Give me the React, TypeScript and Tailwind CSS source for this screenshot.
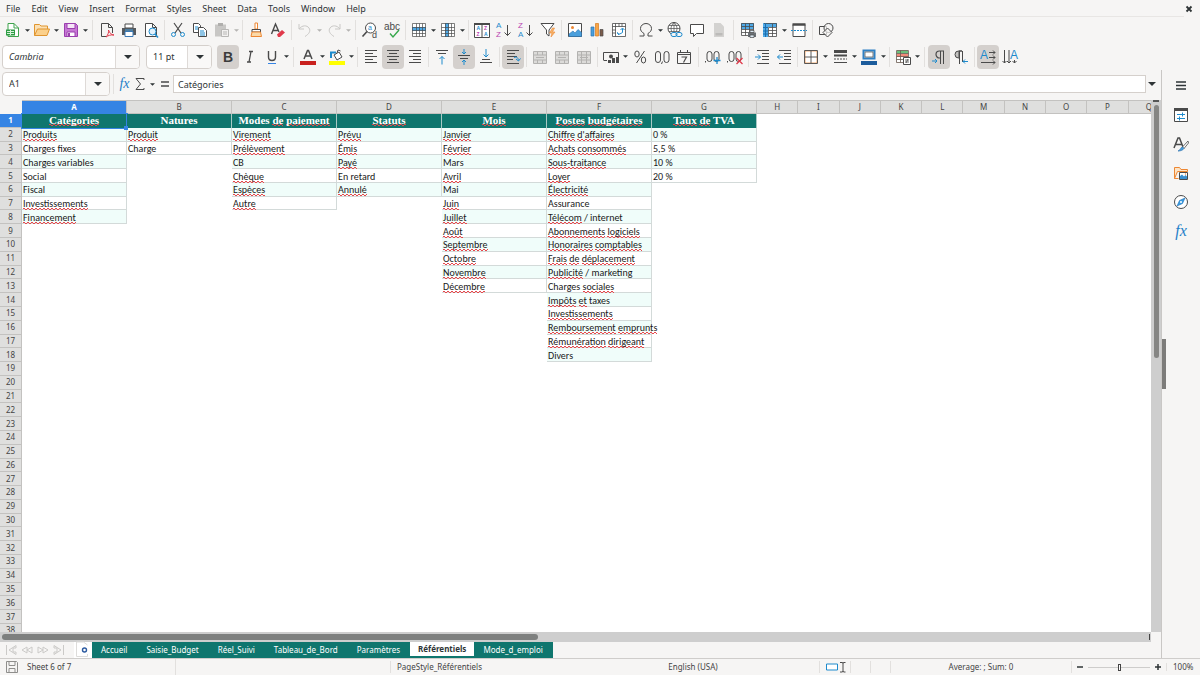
import * as React from "react";
import { useState } from "react";
import { clsx } from "clsx";

const INK = "#4a4a4a";
const BLUE = "#1e8bcd";
const PURPLE = "#b83fb0";
const ORANGE = "#ed8733";

interface Tool {
  id: string;
  icon: React.ReactNode;
  menu?: boolean;
  active?: boolean;
  disabled?: boolean;
}

interface ToolGroup {
  tools: Tool[];
  wide?: boolean;
}

const alignLines = (widths: number[][]) => (
  <g stroke={INK} strokeWidth="1">
    {widths.map(([x1, x2, y]) => (
      <path key={y} d={`M${x1} ${y}H${x2}`} />
    ))}
  </g>
);

const grid = (
  <path d="M1.5 1.5h13v13h-13zM1.5 5.500h13M1.5 8.500h13M1.5 11.500h13M5.500 1.500v13M8.500 1.500v13M11.500 1.500v13" stroke={INK} strokeWidth=".7" fill="none" />
);

const mergeGrid = (
  <>
    <path d="M1.5 2.5h13v12h-13z" fill="#dcdbd9" />
    <path d="M1.5 2.5h13v12h-13zM1.5 6h13M1.5 11h13M5.5 2.5v3.5M10.5 2.5v3.5M5.5 11v3.5M10.5 11v3.5M4 8.500h8" stroke="#b3b2b0" fill="none" />
  </>
);

const pilcrow = "M13 2H8.5a3.5 3.5 0 0 0 0 7H9";

const standardTools: ToolGroup[] = [
  {
    wide: true,
    tools: [
      {
        id: "New",
        menu: true,
        icon: (
          <>
            <path d="M3 1.5h6l4.5 4.5v8.5H3z" fill="#fff" stroke="#3fa34d" />
            <path d="M9 1.5v4.5h4.5" fill="none" stroke="#3fa34d" />
            <path d="M1 7.5h9v6H1z" fill="#2f9e44" />
            <path d="M2 9.5h7M2 11.5h7M5.500 8v5" stroke="#d6f0da" />
          </>
        )
      },
      {
        id: "Open",
        menu: true,
        icon: (
          <>
            <path d="M.5 13.500V2.500h5l1.500 1.500h6.500v3" fill="#fbe0b4" stroke="#e0952f" />
            <path d="M.5 13.500L3.500 7h12l-2.500 6.500z" fill="#fbd08b" stroke="#e0952f" />
          </>
        )
      },
      {
        id: "Save",
        menu: true,
        icon: (
          <>
            <path d="M1.500 1.500h11l2 2v11h-13z" fill="#c678d4" stroke="#9b3fae" />
            <path d="M4 1.500h8v5H4z" fill="#f6e6f8" stroke="#9b3fae" />
            <path d="M4 10h8v4.500H4z" fill="#fff" stroke="#9b3fae" />
            <path d="M6 11v3" stroke="#9b3fae" strokeWidth="2" />
          </>
        )
      }
    ]
  },
  {
    tools: [
      {
        id: "Export as PDF",
        icon: (
          <>
            <path d="M2.500 1.500h7l4 4V11M2.500 1.500v13h5M9.500 1.500v4h4" fill="none" stroke={INK} />
            <path d="M7 15c2-2 3-5 2.500-7 1 3 3 5 5.500 5-3-.5-6 .5-8 2z" fill="none" stroke="#e0394a" />
          </>
        )
      },
      {
        id: "Print",
        icon: (
          <>
            <path d="M4 2h8v4H4z" fill="#fff" stroke={INK} />
            <path d="M1 6h14v7H1z" fill="#55595d" />
            <path d="M4 9.500h8v5H4z" fill="#fff" stroke="#3a78b5" />
            <path d="M4 8h8" stroke="#49a3e2" />
          </>
        )
      },
      {
        id: "Print Preview",
        icon: (
          <>
            <path d="M2.500 14.500V1.500h7l4 4v9zM9.500 1.500v4h4" fill="#fff" stroke={INK} />
            <circle cx="9.500" cy="9.500" r="3.500" fill="#e3f1fb" stroke={BLUE} />
            <path d="M12 12l3 3.500" stroke={BLUE} strokeWidth="1.500" />
          </>
        )
      }
    ]
  },
  {
    tools: [
      {
        id: "Cut",
        icon: (
          <>
            <path d="M4 1l7 10M12 1L5 11" stroke={INK} strokeWidth="1.200" />
            <circle cx="3.500" cy="12.500" r="2" fill="none" stroke={BLUE} />
            <circle cx="12.500" cy="12.500" r="2" fill="none" stroke={BLUE} />
          </>
        )
      },
      {
        id: "Copy",
        icon: (
          <>
            <path d="M1.500 10.500v-9h5l2 2v7z" fill="#fff" stroke={INK} />
            <path d="M6.500 14.500v-9h5l3 3v6z" fill="#fff" stroke={INK} />
            <path d="M3 5h3M3 7h3M8 9h4M8 11h5M8 13h5" stroke={BLUE} />
          </>
        )
      },
      {
        id: "Paste",
        menu: true,
        disabled: true,
        icon: (
          <>
            <path d="M1 2.500h11v12H1z" fill="#c8c7c5" />
            <path d="M4 1h5v3H4z" fill="#b0afad" />
            <path d="M7.500 7.500h7v7h-7z" fill="#f2f1f0" stroke="#b8b7b5" />
            <path d="M9 10h4M9 12h4" stroke="#b8b7b5" />
          </>
        )
      }
    ]
  },
  {
    tools: [
      {
        id: "Clone Formatting",
        icon: (
          <>
            <path d="M7 1h2.500v6H7z" fill="#fff" stroke={ORANGE} />
            <path d="M4 7.500h8.500v2.500H4z" fill="#fff" stroke={INK} />
            <path d="M4 10h8.500l1 4.500H3z" fill="#fbd9a8" stroke={ORANGE} />
          </>
        )
      },
      {
        id: "Clear Direct Formatting",
        icon: (
          <>
            <path d="M1.500 12L5.500 2l3.500 8M3 8.500h5" fill="none" stroke={INK} strokeWidth="1.400" />
            <path d="M7 12.500l5-4.500 3 2.500-5 4.500H8z" fill="#e0394a" />
          </>
        )
      }
    ]
  },
  {
    wide: true,
    tools: [
      { id: "Undo", menu: true, disabled: true, icon: <path d="M2 2v5h5M2 7c3-4 8-4 10-1s0 6-4 8.500" fill="none" stroke="#c9c8c6" /> },
      { id: "Redo", menu: true, disabled: true, icon: <path d="M14 2v5H9M14 7c-3-4-8-4-10-1s0 6 4 8.500" fill="none" stroke="#c9c8c6" /> }
    ]
  },
  {
    tools: [
      {
        id: "Find and Replace",
        icon: (
          <>
            <circle cx="8.500" cy="6" r="5" fill="#fff" stroke={INK} />
            <path d="M5 9.500L.5 14.500" stroke={INK} strokeWidth="1.600" />
            <text x="6" y="8" fontSize="7" fill={BLUE}>a</text>
            <text x="10" y="15.500" fontSize="9" fill={INK}>d</text>
          </>
        )
      },
      {
        id: "Spelling",
        icon: (
          <>
            <text x="0" y="7.500" fontSize="10" fill={INK}>abc</text>
            <path d="M6 11.500l3 3.500 6-7" fill="none" stroke="#37a84c" strokeWidth="1.400" />
          </>
        )
      }
    ]
  },
  {
    tools: [
      { id: "Row", menu: true, icon: <><path d="M1.500 1.500h13v13h-13z" fill="#fff" /><path d="M1 5h14v4H1z" fill="#4fa9e6" />{grid}</> },
      { id: "Column", menu: true, icon: <><path d="M1.500 1.500h13v13h-13z" fill="#fff" /><path d="M5 1h4v14H5z" fill="#4fa9e6" />{grid}</> }
    ]
  },
  {
    tools: [
      {
        id: "Sort",
        icon: (
          <>
            <path d="M.5 1.500h15v14H.5zM8 1.500v14" fill="#fff" stroke={INK} />
            <path d="M0 2h16" stroke={INK} strokeWidth="2" />
            <g fontSize="5" fontWeight="700">
              <text x="2.500" y="8" fill={BLUE}>A</text>
              <text x="2.500" y="14" fill={PURPLE}>Z</text>
              <text x="10" y="8" fill={PURPLE}>Z</text>
              <text x="10" y="14" fill={BLUE}>A</text>
            </g>
          </>
        )
      },
      {
        id: "Sort Ascending",
        icon: (
          <>
            <text x="0" y="6" fontSize="8" fill={BLUE}>A</text>
            <text x="0" y="15" fontSize="8" fill={PURPLE}>Z</text>
            <path d="M11.500 3v10.500M8.500 10.500l3 3 3-3" fill="none" stroke={INK} />
          </>
        )
      },
      {
        id: "Sort Descending",
        icon: (
          <>
            <text x="0" y="6" fontSize="8" fill={PURPLE}>Z</text>
            <text x="0" y="15" fontSize="8" fill={BLUE}>A</text>
            <path d="M11.500 3v10.500M8.500 10.500l3 3 3-3" fill="none" stroke={INK} />
          </>
        )
      },
      {
        id: "AutoFilter",
        icon: (
          <>
            <path d="M1 1.500h13L9 8v6L6.500 12V8z" fill="#fff" stroke={INK} />
            <path d="M12.500 6l-3 5h2.500l-1 4 4-5h-2.500l2-4z" fill="#f7b46a" stroke={ORANGE} strokeWidth=".6" />
          </>
        )
      }
    ]
  },
  {
    tools: [
      {
        id: "Insert Image",
        icon: (
          <>
            <path d="M1.500 1.500h13v13h-13z" fill="#fff" stroke={INK} />
            <circle cx="5.500" cy="5.500" r="1.500" fill={ORANGE} />
            <path d="M2 12l4-3 2 2 3-3.500 3.500 3V14.500H2z" fill="#4a9fdc" stroke="#2d73b0" strokeWidth=".6" />
          </>
        )
      },
      {
        id: "Insert Chart",
        icon: (
          <>
            <path d="M2 5h3v9H2z" fill="#4a9fdc" stroke="#2d73b0" strokeWidth=".7" />
            <path d="M6.500 1.500h3V14h-3z" fill="#f7a648" stroke="#d97a1c" strokeWidth=".7" />
            <path d="M11 7.500h3V14h-3z" fill="#7b5b4a" stroke={INK} strokeWidth=".7" />
          </>
        )
      },
      {
        id: "Insert Pivot Table",
        icon: (
          <>
            <path d="M1.500 1.500h13v13h-13zM1.500 4.500h13M4.500 1.500v13M8 1.500v3M11 1.500v3M1.500 8h3M1.500 11h3" fill="#fff" stroke={INK} strokeWidth=".8" />
            <path d="M6.500 10.500c0 2 1 2.500 5 0V6.500M9.500 8l2-2 2 2M8 13l-1.500-2.500" fill="none" stroke={BLUE} />
          </>
        )
      }
    ]
  },
  {
    wide: true,
    tools: [
      { id: "Special Character", menu: true, icon: <path d="M1.500 14h4.500v-2.500C3.500 10 2.500 8.500 2.500 6.500a5.500 5 0 0 1 11 0c0 2-1 3.500-3.500 5V14h4.500" fill="none" stroke={INK} /> },
      {
        id: "Hyperlink",
        icon: (
          <>
            <circle cx="7" cy="6.500" r="6" fill="#fff" stroke={INK} />
            <path d="M1 6.500h12M2 3.500h10M2 9.500h10M7 .5v12M7 .5c-4 4-4 8 0 12M7 .5c4 4 4 8 0 12" fill="none" stroke={INK} strokeWidth=".7" />
            <path d="M4 10h12v6H4z" fill="#f6f5f4" />
            <rect x="4" y="10.500" width="6" height="4" rx="2" fill="none" stroke={BLUE} />
            <rect x="9" y="10.500" width="6" height="4" rx="2" fill="none" stroke={BLUE} />
          </>
        )
      },
      { id: "Comment", icon: <path d="M1.500 2.500h13v9H7.500l-3 3v-3h-3z" fill="#fff" stroke={INK} /> },
      {
        id: "Headers and Footers",
        disabled: true,
        icon: (
          <>
            <path d="M3 1h6.500L13 4.500V15H3z" fill="#d3d2d0" />
            <path d="M4.500 11h7v2.500h-7z" fill="#bcbbb9" />
          </>
        )
      }
    ]
  },
  {
    tools: [
      {
        id: "Define Print Area",
        icon: (
          <>
            <path d="M1.500 1.500h12v12h-12z" fill="#fff" />
            <path d="M1 1h13v6H1z" fill="#4fa9e6" />
            <path d="M1.500 1.500h12v12h-12zM1.500 4.500h12M1.500 7.500h12M1.500 10.500h12M5.500 1.500v12M9.500 1.500v12" fill="none" stroke={INK} strokeWidth=".8" />
            <path d="M8 10.500h8V15H8z" fill="#6b7075" />
            <path d="M10 8.500h4v2h-4zM10 13h4v2.500h-4z" fill="#dceaf5" stroke={INK} strokeWidth=".7" />
          </>
        )
      },
      {
        id: "Freeze Rows and Columns",
        menu: true,
        icon: (
          <>
            <path d="M1.500 1.500h13v13h-13z" fill="#fff" />
            <path d="M1 1h14v4H1zM1 1h5v14H1z" fill="#4fa9e6" />
            <path d="M6.500 5.500h8v9h-8zM6.500 8.500h8M6.500 11.500h8M10.500 2v12.500M2 1.500h12.500v4" fill="none" stroke={INK} strokeWidth=".8" />
            <path d="M1 5.500h5M1 9h5M1 12h5M3.500 1v14" stroke="#1b6fb0" />
          </>
        )
      },
      {
        id: "Split Window",
        icon: (
          <>
            <path d="M2 2.500h12v12H2z" fill="#fff" stroke={INK} />
            <path d="M1.500 2.500h13" stroke={INK} strokeWidth="2.500" />
            <path d="M0 8.500h16" stroke={BLUE} strokeDasharray="2 1" />
          </>
        )
      }
    ]
  },
  {
    tools: [
      {
        id: "Show Draw Functions",
        icon: (
          <>
            <path d="M1.500 4.500h7v8h-7z" fill="#f6f5f4" stroke={INK} />
            <circle cx="10.500" cy="6" r="4.500" fill="#f6f5f4" fillOpacity=".7" stroke={INK} />
            <path d="M9.500 6l4.500 4.500-4.500 4.500L5 10.500z" fill="#f6f5f4" fillOpacity=".7" stroke={INK} />
          </>
        )
      }
    ]
  }
];

const formatTools: ToolGroup[] = [
  {
    wide: true,
    tools: [
      { id: "Bold", active: true, icon: <text x="3" y="13" fontSize="14" fontWeight="700" fill="#3b3b3b">B</text> },
      { id: "Italic", icon: <path d="M7 2.500h4M5 13h4M9 2.500L7 13" stroke={INK} strokeWidth="1.300" /> },
      {
        id: "Underline",
        menu: true,
        icon: (
          <>
            <path d="M4.500 2v6c0 2.500 1.200 3.500 3.500 3.500s3.500-1 3.500-3.500V2" fill="none" stroke={INK} strokeWidth="1.400" />
            <path d="M4 14.500h8" stroke="#3584e4" />
          </>
        )
      }
    ]
  },
  {
    tools: [
      {
        id: "Font Color",
        menu: true,
        icon: (
          <>
            <path d="M4 10L7.500 1.500h1L12 10M5.500 7h5" fill="none" stroke={INK} strokeWidth="1.500" />
            <path d="M0 14h16" stroke="#c9211e" strokeWidth="4" />
          </>
        )
      },
      {
        id: "Highlighting Color",
        menu: true,
        icon: (
          <>
            <path d="M2 9V3.500h5" fill="none" stroke={BLUE} strokeWidth="2" />
            <path d="M5 6l5-3 3 5-5 3zM8 4l1-3 2.500 1" fill="#fff" stroke={INK} />
            <path d="M0 14h16" stroke="#ffff00" strokeWidth="4" />
          </>
        )
      }
    ]
  },
  {
    tools: [
      { id: "Align Left", icon: alignLines([[2, 14, 1.5], [2, 10, 4.5], [2, 14, 7.5], [2, 10, 10.5], [2, 14, 13.5]]) },
      { id: "Center Horizontally", active: true, icon: alignLines([[2, 14, 1.5], [4, 12, 4.5], [2, 14, 7.5], [4, 12, 10.5], [2, 14, 13.5]]) },
      { id: "Align Right", icon: alignLines([[2, 14, 1.5], [6, 14, 4.5], [2, 14, 7.5], [6, 14, 10.5], [2, 14, 13.5]]) }
    ]
  },
  {
    tools: [
      { id: "Align Top", icon: <>{alignLines([[2, 14, 1.5], [4, 12, 4.5]])}<path d="M8 15.500v-8M5.500 10L8 7.500l2.500 2.500" fill="none" stroke={BLUE} /></> },
      { id: "Center Vertically", active: true, icon: <>{alignLines([[2, 14, 6.5], [4, 12, 9.5]])}<path d="M8 0v5M6 3l2 2 2-2M8 16v-5M6 13l2-2 2 2" fill="none" stroke={BLUE} /></> },
      { id: "Align Bottom", icon: <>{alignLines([[4, 12, 10.5], [2, 14, 13.5]])}<path d="M8 0v8M5.500 5.500L8 8l2.500-2.500" fill="none" stroke={BLUE} /></> }
    ]
  },
  {
    tools: [
      { id: "Wrap Text", active: true, icon: <>{alignLines([[2, 14, 1.5], [2, 10, 4.5], [2, 12, 7.5], [2, 8, 10.5], [2, 14, 14.5]])}<path d="M9 8.500c3-1 4 0 4.500 3M11 10l2.500 2 2-2.500" fill="none" stroke={BLUE} /></> }
    ]
  },
  {
    tools: [
      { id: "Merge and Center Cells", disabled: true, icon: mergeGrid },
      { id: "Merge Cells", disabled: true, icon: mergeGrid },
      { id: "Unmerge Cells", disabled: true, icon: <>{mergeGrid}<path d="M5.500 6v5M10.500 6v5" stroke="#b3b2b0" /></> }
    ]
  },
  {
    wide: true,
    tools: [
      {
        id: "Format as Currency",
        menu: true,
        icon: (
          <>
            <path d="M.5 11.500v-8h15v5M1 11.500h3" fill="none" stroke={INK} />
            <circle cx="8" cy="7.500" r="2" fill={INK} />
            <path d="M5 11h3v3H5zM9 9h3v5H9zM13 8h3v6h-3z" fill={INK} />
          </>
        )
      },
      {
        id: "Format as Percent",
        icon: (
          <g fill="none" stroke={INK}>
            <ellipse cx="5" cy="5" rx="2.200" ry="3" />
            <ellipse cx="11.500" cy="11" rx="2.200" ry="3" />
            <path d="M12.500 2l-8 12" />
          </g>
        )
      },
      {
        id: "Format as Number",
        icon: (
          <g fill="none" stroke={INK}>
            <rect x="1.500" y="2.500" width="5" height="11" rx="2.500" />
            <rect x="10" y="2.500" width="5" height="11" rx="2.500" />
            <path d="M8.500 12.500l-1 2.500" />
          </g>
        )
      },
      {
        id: "Format as Date",
        icon: (
          <>
            <path d="M1.500 3.500h13v11h-13zM1.500 5.500h13M4.500 1v3M11.500 1v3" fill="none" stroke={INK} />
            <path d="M5.500 8h5l-3 5.500" fill="none" stroke={INK} strokeWidth="1.200" />
          </>
        )
      }
    ]
  },
  {
    tools: [
      {
        id: "Add Decimal Place",
        icon: (
          <g fill="none" stroke={INK}>
            <rect x="2" y="2.500" width="5" height="10" rx="2.500" />
            <rect x="9" y="2.500" width="5" height="10" rx="2.500" />
            <path d="M.5 12v1.500" />
            <path d="M12 8v7M8.500 11.500h7" stroke={BLUE} strokeWidth="1.300" />
          </g>
        )
      },
      {
        id: "Delete Decimal Place",
        icon: (
          <g fill="none" stroke={INK}>
            <rect x="2" y="2.500" width="5" height="10" rx="2.500" />
            <rect x="9" y="2.500" width="5" height="10" rx="2.500" />
            <path d="M.5 12v1.500" />
            <path d="M9.500 9l6 6M15.500 9l-6 6" stroke="#e0394a" strokeWidth="1.300" />
          </g>
        )
      }
    ]
  },
  {
    tools: [
      { id: "Increase Indent", icon: <>{alignLines([[3, 15, 1.5], [8, 15, 4.5], [8, 15, 7.5], [8, 15, 10.5], [3, 15, 14.5]])}<path d="M1 8h5.500M4 5.500L6.500 8 4 10.500" fill="none" stroke={BLUE} /></> },
      { id: "Decrease Indent", icon: <>{alignLines([[3, 15, 1.5], [8, 15, 4.5], [8, 15, 7.5], [8, 15, 10.5], [3, 15, 14.5]])}<path d="M7 8H1.500M4 5.500L1.500 8 4 10.500" fill="none" stroke={BLUE} /></> }
    ]
  },
  {
    tools: [
      { id: "Borders", menu: true, icon: <><path d="M2 2h12v12H2z" fill="#fff" stroke={ORANGE} strokeWidth=".7" /><path d="M1.500 1.500h13v13h-13zM8 2v12M2 8h12" stroke={INK} strokeWidth=".9" /></> },
      { id: "Border Style", menu: true, icon: <><path d="M2 2.500h13" stroke={INK} strokeWidth="3" /><path d="M2 6.500h13" stroke={INK} strokeWidth="2" /><path d="M2 10h13" stroke={INK} strokeDasharray="2 1" /><path d="M2 13.500h13" stroke={INK} /></> },
      { id: "Border Color", menu: true, icon: <><path d="M2.500 1.500h11v8h-11z" fill="#fff" stroke="#2f80c3" strokeWidth="2" /><path d="M4 3h8v5H4z" fill="none" stroke={INK} strokeWidth=".7" /><path d="M0 14h16" stroke="#1c5c9c" strokeWidth="4" /></> }
    ]
  },
  {
    wide: true,
    tools: [
      {
        id: "Conditional Formatting",
        menu: true,
        icon: (
          <>
            <path d="M1.500 1.500h12v12h-12z" fill="#fff" />
            <path d="M2 1.500h11v3H2z" fill="#6cc07c" />
            <path d="M2 5h11v3H2z" fill="#f28a7a" />
            <path d="M1.500 1.500h12v12h-12zM1.500 4.500h12M1.500 7.500h12M1.500 10.500h12M5.500 1.500v12" fill="none" stroke="#6a5a50" strokeWidth=".8" />
            <path d="M8.500 8.500h7v7h-7z" fill="#fff" stroke={INK} />
            <path d="M10 11h4M10 13h4M13 10l-2 4" stroke={INK} strokeWidth=".8" />
          </>
        )
      }
    ]
  },
  {
    tools: [
      { id: "Left-To-Right", active: true, icon: <><path d={pilcrow} fill="none" stroke={INK} strokeWidth="1.200" /><path d="M9.500 2v13M12.500 2v13" stroke={INK} /><path d="M1 12h5M4 10l2 2-2 2" fill="none" stroke={BLUE} /></> },
      { id: "Right-To-Left", icon: <><path d="M9 2H5.500a3.500 3.500 0 0 0 0 7H6V2z" fill="#c4c3c1" stroke={INK} /><path d="M6.500 2v13M9.500 2v11" stroke={INK} /><path d="M15 12.500h-5M12 10.500l-2 2 2 2" fill="none" stroke={BLUE} /></> }
    ]
  },
  {
    tools: [
      { id: "Text Direction Left to Right", active: true, icon: <><text x="0" y="10" fontSize="12" fill={BLUE}>A</text><path d="M9 3.500h6M13 1.500l2 2-2 2M9 8.500h6M13 6.500l2 2-2 2M1 13.500h14M13 11.500l2 2-2 2" fill="none" stroke={INK} /></> },
      { id: "Text Direction Top to Bottom", icon: <><text x="8" y="10" fontSize="12" fill={BLUE}>A</text><path d="M2.500 1v13M.5 12l2 2 2-2M7 1v13M5 12l2 2 2-2M12.500 11v3M10.500 12l2 2 2-2" fill="none" stroke={INK} /></> }
    ]
  }
];

// Square brackets mark the words the spell checker underlines.
const headers = [
  "[Catégories]",
  "Natures",
  "Modes [de] [paiement]",
  "[Statuts]",
  "[Mois]",
  "[Postes] [budgétaires]",
  "[Taux] [de] TVA"
];

const columns: string[][] = [
  ["[Produits]", "Charges fixes", "Charges variables", "Social", "Fiscal", "[Investissements]", "[Financement]"],
  ["[Produit]", "Charge"],
  ["[Virement]", "[Prélèvement]", "CB", "[Chèque]", "[Espèces]", "[Autre]"],
  ["[Prévu]", "[Émis]", "[Payé]", "En retard", "[Annulé]"],
  ["[Janvier]", "[Février]", "Mars", "[Avril]", "Mai", "[Juin]", "[Juillet]", "[Août]", "[Septembre]", "[Octobre]", "[Novembre]", "[Décembre]"],
  [
    "[Chiffre] [d'affaires]",
    "[Achats] [consommés]",
    "[Sous-traitance]",
    "[Loyer]",
    "[Électricité]",
    "Assurance",
    "[Télécom] / internet",
    "[Abonnements] [logiciels]",
    "[Honoraires] [comptables]",
    "[Frais] [de] [déplacement]",
    "[Publicité] / marketing",
    "Charges [sociales]",
    "[Impôts] [et] taxes",
    "[Investissements]",
    "[Remboursement] [emprunts]",
    "[Rémunération] [dirigeant]",
    "Divers"
  ],
  ["0 %", "5,5 %", "10 %", "20 %"]
];

const letters = "ABCDEFGHIJKLMNOPQ".split("");
const rowNumbers = Array.from({ length: 38 }, (_, i) => i + 1);
const menus = ["File", "Edit", "View", "Insert", "Format", "Styles", "Sheet", "Data", "Tools", "Window", "Help"];
const sheets = ["Accueil", "Saisie_Budget", "Réel_Suivi", "Tableau_de_Bord", "Paramètres", "Référentiels", "Mode_d_emploi"];

function Icon({ children, className }: { children: React.ReactNode; className?: string }) {
  return (
    <svg viewBox="0 0 16 16" className={clsx("size-4 shrink-0 overflow-visible font-['Liberation_Sans',sans-serif]", className)} fill="none" aria-hidden="true">
      {children}
    </svg>
  );
}

function Caret({ faded, big }: { faded?: boolean; big?: boolean }) {
  return (
    <svg viewBox="0 0 8 4" className={big ? "h-1 w-2" : "h-[3px] w-[5px]"} aria-hidden="true">
      <path d="M0 0h8L4 4z" fill={faded ? "#b5b4b2" : "#2e3436"} />
    </svg>
  );
}

function Divider({ wide }: { wide?: boolean }) {
  return (
    <div className={clsx("flex h-5 shrink-0 justify-center", wide ? "w-[7px]" : "w-[5px]")}>
      <div className="w-px bg-[#e2e0de]" />
    </div>
  );
}

function Toolbar({ groups, label }: { groups: ToolGroup[]; label: string }) {
  return (
    <div role="toolbar" aria-label={label} className="flex items-center">
      {groups.map((group, i) => (
        <React.Fragment key={i}>
          {group.tools.map((tool) => (
            <React.Fragment key={tool.id}>
              <button
                aria-label={tool.id}
                disabled={tool.disabled}
                className={clsx("flex h-6 w-[22px] shrink-0 items-center justify-center rounded", tool.active && "bg-[#d4d0cd]")}
              >
                <Icon>{tool.icon}</Icon>
              </button>
              {tool.menu && (
                <button aria-label={`${tool.id} options`} disabled={tool.disabled} className="flex h-6 w-[7px] shrink-0 items-center justify-center">
                  <Caret faded={tool.disabled} />
                </button>
              )}
            </React.Fragment>
          ))}
          {i < groups.length - 1 && <Divider wide={group.wide} />}
        </React.Fragment>
      ))}
    </div>
  );
}

function ComboBox({ label, value, className, inputClass }: { label: string; value: string; className: string; inputClass?: string }) {
  return (
    <div className={clsx("flex h-6 shrink-0 overflow-hidden rounded border border-[#d5d0cc] bg-white", className)}>
      <input aria-label={label} defaultValue={value} className={clsx("min-w-0 flex-1 px-1.5 text-[9px] text-[#2e3436] outline-none", inputClass)} />
      <button aria-label={`${label} list`} className="flex w-6 shrink-0 items-center justify-center border-l border-[#dedad7] bg-[#f9f8f7]">
        <Caret big />
      </button>
    </div>
  );
}

function Spelled({ text }: { text: string }) {
  return (
    <>
      {text.split(/(\[[^\]]+\])/).map((part, i) =>
        part.startsWith("[") ? (
          <span
            key={i}
            className="bg-[conic-gradient(transparent_25%,#e8474c_0_50%,transparent_0_75%,#e8474c_0)] bg-size-[4px_2px] bg-bottom-left bg-repeat-x"
          >
            {part.slice(1, -1)}
          </span>
        ) : (
          part
        )
      )}
    </>
  );
}

function Sheet() {
  return (
    <table className="h-[538px] w-[1170px] table-fixed border-separate border-spacing-0">
      <colgroup>
        <col className="w-[22px]" />
        {letters.map((letter, i) => (
          <col key={letter} className={i < 7 ? "w-[105px]" : undefined} />
        ))}
      </colgroup>
      <thead>
        <tr className="h-[14px] text-[8px] leading-[12px] text-[#444]">
          <td className="bg-[#f6f5f4] p-0" />
          {letters.map((letter, i) => (
            <th
              key={letter}
              scope="col"
              className={clsx(
                "border-t border-r border-b border-[#c3c2c0] p-0",
                i === 0 ? "bg-[#3584e4] font-bold text-white" : "bg-[#dfdfde] font-normal"
              )}
            >
              {letter}
            </th>
          ))}
        </tr>
      </thead>
      <tbody>
        {rowNumbers.map((row) => (
          <tr key={row} className="text-[10px] leading-[11px]">
            <th
              scope="row"
              className={clsx(
                "border-r border-b border-[#c3c2c0] p-0 text-[8px] leading-[12px]",
                row === 1 ? "bg-[#3584e4] font-bold text-white" : "bg-[#dfdfde] font-normal text-[#444]"
              )}
            >
              {row}
            </th>
            {letters.map((letter, i) => {
              if (row === 1 && headers[i]) {
                return (
                  <td
                    key={letter}
                    className={clsx(
                      "relative border-r bg-[#0f766e] p-0 text-center font-['Liberation_Serif',serif] text-[11px] font-bold whitespace-nowrap text-white",
                      i === 0 ? "border-[#3584e4] outline outline-[#3584e4]" : "border-[#a9c9c5]"
                    )}
                  >
                    <Spelled text={headers[i]} />
                    {i === 0 && <span className="absolute -right-0.5 -bottom-0.5 z-10 size-1 bg-[#3584e4]" />}
                  </td>
                );
              }
              const value = columns[i]?.[row - 2];
              return value ? (
                <td
                  key={letter}
                  className={clsx(
                    "border-r border-b border-[#d3dad9] p-0 pt-px pl-px font-[Carlito,Lato,sans-serif] whitespace-nowrap text-[#1a1a1a]",
                    row % 2 === 0 && "bg-[#f0fdfa]"
                  )}
                >
                  <Spelled text={value} />
                </td>
              ) : (
                <td key={letter} className="p-0" />
              );
            })}
          </tr>
        ))}
      </tbody>
    </table>
  );
}

function Sidebar() {
  return (
    <aside className="relative flex w-[39px] shrink-0 flex-col items-center gap-[9px] border-l border-[#c9c7c5] pt-1.5">
      <button aria-label="Sidebar Settings" className="flex size-5 items-center justify-center">
        <Icon>
          <path d="M3 4h10M3 7.500h10M3 11h10" stroke="#2e3436" strokeWidth="1.500" />
        </Icon>
      </button>
      <button aria-label="Properties" className="flex size-5 items-center justify-center">
        <Icon>
          <path d="M1.500 1.500h13v13h-13z" fill="#fff" stroke={INK} />
          <path d="M1 2.500h14" stroke={INK} strokeWidth="3" />
          <path d="M4 7.500h8M9.500 5.500v4" stroke={BLUE} />
          <path d="M4 11.500h8M6.500 9.500v4" stroke={BLUE} />
        </Icon>
      </button>
      <button aria-label="Styles" className="flex size-5 items-center justify-center">
        <Icon>
          <path d="M1 12L5 2h1.500l3.500 9M2.500 8.500h6" stroke={INK} strokeWidth="1.500" />
          <path d="M15 5l-5.500 6 1.500 1.500L15.500 7z" fill="#fff" stroke={INK} strokeWidth=".8" />
          <path d="M5 15c3 0 5-1 6-2.500L9.500 11C7.500 11 8 14 5 15z" fill="#4a9fdc" stroke="#2d73b0" strokeWidth=".7" />
        </Icon>
      </button>
      <button aria-label="Gallery" className="flex size-5 items-center justify-center">
        <Icon>
          <path d="M1.500 13.500v-11h5l1.500 2h6.500v2H4.500l-3 7h4" fill="#fde3c4" stroke={ORANGE} />
          <path d="M6.500 7.500h8v7h-8z" fill="#fff" stroke={INK} />
          <path d="M7 14v-3l2-1.500 2 2 1.500-1.500 1.500 1.500V14z" fill="#3a8fd0" />
          <circle cx="12.500" cy="9" r=".7" fill={ORANGE} />
        </Icon>
      </button>
      <button aria-label="Navigator" className="flex size-5 items-center justify-center">
        <Icon>
          <circle cx="8" cy="8" r="6.500" fill="#fff" stroke={INK} />
          <path d="M12 4L9.500 9.500 4 12l2.500-5.500z" fill="#3a9be0" stroke="#1c71b8" strokeWidth=".6" />
          <circle cx="8" cy="8" r="1" fill="#fff" />
        </Icon>
      </button>
      <button aria-label="Functions" className="size-5 font-['Liberation_Serif',serif] text-base leading-5 text-[#1e7fc8] italic">
        fx
      </button>
      <div className="absolute top-[269px] left-0 h-[50px] w-1 bg-[#7d7c7a]" />
    </aside>
  );
}

export default function App() {
  const [sheet, setSheet] = useState("Référentiels");

  return (
    <div className="flex h-screen flex-col overflow-hidden bg-[#f6f5f4] font-['Noto_Sans',sans-serif] text-[9px] text-[#2e3436]">
      <nav className="flex h-4 shrink-0 items-center justify-between pt-0.5 pr-[7px] pl-1.5">
        <div className="flex flex-1 items-center gap-[11px] leading-[14px]">
          {menus.map((menu) => (
            <button key={menu}>{menu}</button>
          ))}
        </div>
        <button aria-label="Close Document">
          <svg viewBox="0 0 8 8" className="size-2" aria-hidden="true">
            <path d="M1.500 1.500l5 5M6.500 1.500l-5 5" stroke="#2e3436" strokeWidth="1.800" />
          </svg>
        </button>
      </nav>

      <div className="mr-4 flex h-[27px] shrink-0 items-center border-t border-[#e8e6e4] pl-0.5">
        <Toolbar groups={standardTools} label="Standard" />
      </div>
      <div className="flex h-[27px] shrink-0 items-center pl-0.5">
        <ComboBox label="Font Name" value="Cambria" className="w-[138px]" inputClass="italic" />
        <ComboBox label="Font Size" value="11 pt" className="mr-[5px] ml-1.5 w-[66px]" />
        <Toolbar groups={formatTools} label="Formatting" />
      </div>

      <div className="flex min-h-0 flex-1">
        <main className="flex min-w-0 flex-1 flex-col">
          <div className="flex h-[30px] shrink-0 items-center pr-[5px] pb-0.5 pl-0.5">
            <ComboBox label="Name Box" value="A1" className="w-[108px]" />
            <Divider wide />
            <button aria-label="Function Wizard" className="w-[15px] font-['Liberation_Serif',serif] text-sm leading-5 text-[#1e7fc8] italic">
              fx
            </button>
            <button aria-label="Select Function" className="flex h-6 w-4 items-center justify-center">
              <Icon>
                <path d="M12 4V2.500H4L8.500 8 4 13.500h8V12" stroke={INK} />
              </Icon>
            </button>
            <button aria-label="Select Function options" className="flex h-6 w-2 items-center justify-center">
              <Caret />
            </button>
            <button aria-label="Formula" className="flex h-6 w-[17px] items-center justify-center">
              <Icon>
                <path d="M4 6h8M4 10h8" stroke={INK} strokeWidth="1.500" />
              </Icon>
            </button>
            <input aria-label="Input line" defaultValue="Catégories" className="h-[18px] min-w-0 flex-1 border border-[#d5d0cc] bg-white px-1 text-[9px] outline-none" />
            <button aria-label="Expand Formula Bar" className="ml-0.5 flex h-6 w-2 items-center justify-center">
              <Caret big />
            </button>
          </div>

          <div className="flex min-h-0 flex-1">
            <div className="min-w-0 flex-1 overflow-hidden bg-white">
              <Sheet />
            </div>
            <div className="flex w-[10px] shrink-0 flex-col items-center bg-[#cecece]">
              <div className="h-0.5 w-1.5 bg-[#555]" />
              <div className="mt-[3px] h-[253px] w-[5px] rounded-full bg-[#868684]" />
            </div>
          </div>
          <div className="mr-[10px] flex h-[10px] shrink-0 items-center justify-between bg-[#cecece] pr-px pl-0.5">
            <div className="h-1.5 w-[536px] rounded-full bg-[#7e807f]" />
            <div className="h-1.5 w-px bg-[#444]" />
          </div>

          <div className="flex h-4 shrink-0 items-stretch text-[8px]">
            <div className="flex w-[74px] items-center gap-1 pl-[5px]">
              {["First", "Previous", "Next", "Last"].map((name, i) => (
                <button key={name} aria-label={`${name} sheet`} disabled>
                  <svg viewBox="0 0 12 12" className="size-3" fill="none" stroke="#cbcac8" aria-hidden="true">
                    {i === 0 && <path d="M1.500 1v10M11 1.500L4 6l7 4.500V8h-3V4h3z" />}
                    {i === 1 && <path d="M6 3v6L1 6zM11 3v6L6 6z" />}
                    {i === 2 && <path d="M1 3v6l5-3zM6 3v6l5-3z" />}
                    {i === 3 && <path d="M10.500 1v10M1 1.500L8 6l-7 4.500V8h3V4H1z" />}
                  </svg>
                </button>
              ))}
            </div>
            <button aria-label="Add sheet" className="flex w-[18px] items-center justify-center bg-white">
              <Icon>
                <path d="M1.500 0v14.500h11V12M1.500 0h7l4 3" stroke="#dddcda" />
                <circle cx="9.500" cy="8" r="2" fill="#fff" stroke="#2c5aa0" strokeWidth="1.400" />
              </Icon>
            </button>
            <div role="tablist" className="flex bg-[#0f766e]">
              {sheets.map((name) => (
                <button
                  key={name}
                  role="tab"
                  aria-selected={name === sheet}
                  onClick={() => setSheet(name)}
                  className={clsx(
                    "leading-[14px]",
                    name === sheet ? "mb-0.5 bg-white px-2 font-bold text-[#2e3436]" : "mr-px px-[9px] text-white"
                  )}
                >
                  {name}
                </button>
              ))}
            </div>
          </div>
        </main>
        <Sidebar />
      </div>

      <footer className="flex h-[17px] shrink-0 items-center border-t border-[#cfcdcb] text-[8px] leading-[12px] text-[#444]">
        <div className="flex w-[176px] items-center gap-[7px] border-r border-[#e2e0de] pl-1">
          <Icon>
            <path d="M2.500 2.500h10l1 1v10h-11zM5 2.500v4h6v-4M5 13.500v-4h6v4" stroke="#8f8e8c" />
          </Icon>
          <span>Sheet 6 of 7</span>
        </div>
        <div className="w-[215px] border-r border-[#e2e0de] py-1.5" />
        <div className="w-[176px] pl-1.5">PageStyle_Référentiels</div>
        <div className="flex-1 text-center">English (USA)</div>
        <div className="flex w-[32px] items-center gap-1 border-x border-[#e2e0de] pl-1.5">
          <svg viewBox="0 0 20 12" className="h-3 w-5" fill="none" aria-hidden="true">
            <path d="M.5 3h11v6H.5z" fill="#fff" stroke={BLUE} />
            <path d="M14 1.500h2l1 .5 1-.5h1.500M14 11h2l1-.5 1 .5h1.500M17 1.500V11" stroke={INK} />
          </svg>
        </div>
        <div className="w-5 border-r border-[#e2e0de] py-1.5" />
        <div className="w-5 border-r border-[#e2e0de] py-1.5" />
        <div className="w-[181px] border-r border-[#e2e0de] text-center">Average: ; Sum: 0</div>
        <div className="flex w-[95px] items-center gap-1 border-r border-[#e2e0de] px-1">
          <button aria-label="Zoom Out">
            <svg viewBox="0 0 8 8" className="size-2" aria-hidden="true">
              <path d="M1 4h6" stroke="#2e3436" strokeWidth="1.500" />
            </svg>
          </button>
          <input
            type="range"
            aria-label="Zoom"
            defaultValue={50}
            className="h-2 w-0 flex-1 appearance-none bg-linear-to-b from-transparent from-45% via-[#8b8a88] via-50% to-transparent to-60% [&::-webkit-slider-thumb]:h-[7px] [&::-webkit-slider-thumb]:w-[3px] [&::-webkit-slider-thumb]:appearance-none [&::-webkit-slider-thumb]:border [&::-webkit-slider-thumb]:border-[#444] [&::-webkit-slider-thumb]:bg-white"
          />
          <button aria-label="Zoom In">
            <svg viewBox="0 0 8 8" className="size-2" aria-hidden="true">
              <path d="M1 4h6M4 1v6" stroke="#2e3436" strokeWidth="1.500" />
            </svg>
          </button>
        </div>
        <div className="w-[33px] pl-1.5">100%</div>
      </footer>
    </div>
  );
}
